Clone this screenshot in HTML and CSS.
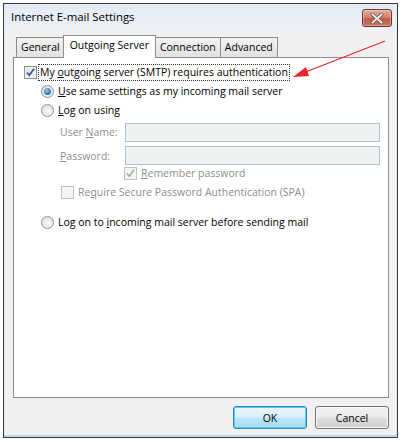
FILE: index.html
```html
<!DOCTYPE html>
<html>
<head>
<meta charset="utf-8">
<link rel="stylesheet" href="styles.css">
</head>
<body>
<div class="window">
  <div class="titlebar">
    <span class="title">Internet E-mail Settings</span>
    <span class="close"><svg width="14" height="11" viewBox="0 0 14 11"><path d="M2.5 1.5 L11.5 9.5 M11.5 1.5 L2.5 9.5" stroke="#6b5a58" stroke-width="3.4" stroke-linecap="square" fill="none"/><path d="M2.5 1.5 L11.5 9.5 M11.5 1.5 L2.5 9.5" stroke="#f4f4f4" stroke-width="1.8" stroke-linecap="square" fill="none"/></svg></span>
  </div>
  <div class="client">
    <div class="tabs">
      <div class="tab">General</div>
      <div class="tab active">Outgoing Server</div>
      <div class="tab">Connection</div>
      <div class="tab">Advanced</div>
    </div>
    <div class="panel">
      <div class="row r1">
        <span class="cb"><svg class="tick" width="11" height="11" viewBox="0 0 11 11"><path d="M2 5.5 L4.3 8.3 L9 1.8" stroke="#3d55a0" stroke-width="1.7" fill="none"/></svg></span>
        <span class="focus">My <u>o</u>utgoing server (SMTP) requires authentication</span>
      </div>
      <div class="row r2 ind1">
        <span class="rb on"></span>
        <span class="lbl"><u>U</u>se same settings as my incoming mail server</span>
      </div>
      <div class="row r3 ind1">
        <span class="rb"></span>
        <span class="lbl"><u>L</u>og on using</span>
      </div>
      <div class="row r4 ind2">
        <span class="flabel dis">User <u>N</u>ame:</span>
        <span class="field"></span>
      </div>
      <div class="row r5 ind2">
        <span class="flabel dis"><u>P</u>assword:</span>
        <span class="field"></span>
      </div>
      <div class="row r6 ind3">
        <span class="cb dis"><svg class="tick" width="11" height="11" viewBox="0 0 11 11"><path d="M2 5.5 L4.3 8.3 L9 1.8" stroke="#a8a8a8" stroke-width="1.5" fill="none"/></svg></span>
        <span class="lbl dis"><u>R</u>emember password</span>
      </div>
      <div class="row r7 ind2b">
        <span class="cb dis"></span>
        <span class="lbl dis">Re<u>q</u>uire Secure Password Authentication (SPA)</span>
      </div>
      <div class="row r8 ind1">
        <span class="rb"></span>
        <span class="lbl">Log on to <u>i</u>ncoming mail server before sending mail</span>
      </div>
    </div>
    <div class="buttons">
      <div class="btn default">OK</div>
      <div class="btn">Cancel</div>
    </div>
  </div>
  <svg class="arrow" width="100" height="45" viewBox="0 0 100 45">
    <line x1="96" y1="1" x2="14" y2="33" stroke="#e8262a" stroke-width="1.2"/>
    <polygon points="4,37 17,27 20,36" fill="#e8262a"/>
  </svg>
</div>
</body>
</html>
```
FILE: styles.css
```css
* { box-sizing: border-box; }
html, body { margin: 0; padding: 0; background: #fff; }
body { font-family: "Open Sans", "Noto Sans", sans-serif; font-size: 10.5px; color: #000; }
.window {
  position: relative;
  margin: 3px 0 0 3px;
  width: 395px;
  height: 435px;
  border: 1px solid #3a3a3a;
  background: #f0f0f0;
  box-shadow: inset 0 -2px 0 #bcd6ee, inset 1px 0 0 #dde8f4, inset -1px 0 0 #dde8f4;
  display: flex;
  flex-direction: column;
}
.titlebar {
  height: 27px;
  display: flex;
  align-items: flex-start;
  justify-content: space-between;
  padding: 5px 5px 0 7px;
  background: linear-gradient(#e4ebf4, #edf1f6);
}
.title { font-size: 11.4px; line-height: 16px; }
.close {
  width: 30px;
  height: 18px;
  border: 1px solid #6e3434;
  border-radius: 3px;
  background: linear-gradient(#e2ac9f 0%, #d58472 45%, #c25a45 55%, #cc7560 100%);
  display: flex;
  align-items: center;
  justify-content: center;
  box-shadow: inset 0 0 0 1px rgba(255,255,255,0.3);
}
.client { flex: 1; padding: 4px 8px 0 9px; display: flex; flex-direction: column; }
.tabs { display: flex; align-items: flex-end; height: 22px; padding-left: 3px; position: relative; z-index: 1; }
.tab {
  height: 20px;
  padding: 0 4px;
  border: 1px solid #898c95;
  border-bottom: none;
  margin-right: -1px;
  background: linear-gradient(#f3f3f3, #e1e1e1);
  line-height: 18px;
  white-space: nowrap;
}
.tab.active {
  height: 23px;
  background: #fff;
  margin-bottom: -1px;
  margin-left: -1px;
  padding: 0 6px;
  line-height: 19px;
  position: relative;
  z-index: 2;
}
.panel {
  height: 341px;
  background: #fff;
  border: 1px solid #898c95;
  padding: 4px 8px 0 10px;
}
.row { display: flex; align-items: center; }
.r1 { height: 20px; }
.r2 { height: 19px; }
.r3 { height: 19px; }
.r4 { height: 20px; margin-top: 2px; }
.r5 { height: 19px; margin-top: 4px; }
.r6 { height: 14px; margin-top: 1px; }
.r7 { height: 15px; margin-top: 5px; }
.r8 { height: 15px; margin-top: 15px; }
.ind1 { padding-left: 17px; }
.ind2 { padding-left: 36px; }
.ind2b { padding-left: 37px; }
.ind3 { padding-left: 100px; }
.cb {
  width: 13px; height: 13px; flex: none;
  border: 1px solid #8e8f8f;
  background: linear-gradient(135deg, #dcdcdc, #fafafa);
  box-shadow: inset 0 0 0 1px #f4f4f4;
  display: flex;
}
.tick { display: block; }
.cb.dis { border-color: #c0c0c0; background: #f4f4f4; box-shadow: none; }
.focus { margin-left: 2px; padding: 0 1px; outline: 1px dotted #333; line-height: 15px; white-space: nowrap; }
.rb {
  width: 13px; height: 13px; flex: none;
  border-radius: 50%;
  border: 1px solid #8e8f8f;
  background: radial-gradient(circle at 60% 65%, #fafafa, #dcdcdc);
  position: relative;
}
.rb.on::after {
  content: "";
  position: absolute;
  left: 2px; top: 2px;
  width: 7px; height: 7px;
  border-radius: 50%;
  background: radial-gradient(circle at 40% 35%, #8dd0f4, #1f5fa6 75%);
}
.lbl { margin-left: 4px; line-height: 15px; white-space: nowrap; }
.dis { color: #8d8d8d; }
.flabel { width: 65px; flex: none; }
.field {
  flex: 1;
  height: 19px;
  border: 1px solid #b0c3db;
  background: #f0f0f0;
}
.buttons { display: flex; justify-content: flex-end; gap: 8px; padding: 8px 0 0; }
.btn {
  width: 74px; height: 23px;
  border: 1px solid #707070;
  border-radius: 3px;
  background: linear-gradient(#f2f2f2 0%, #ebebeb 48%, #dddddd 52%, #cfcfcf 100%);
  box-shadow: inset 0 0 0 1px #fafafa;
  display: flex; align-items: center; justify-content: center;
}
.btn.default {
  border-color: #3c7fb1;
  background: linear-gradient(#eaf6fd 0%, #d9f0fc 48%, #bee6fd 52%, #a7d9f5 100%);
  box-shadow: inset 0 0 0 1px #48d3fb;
}
.arrow { position: absolute; left: 285px; top: 36px; }
u { text-decoration: underline; text-underline-offset: 1px; }
```
